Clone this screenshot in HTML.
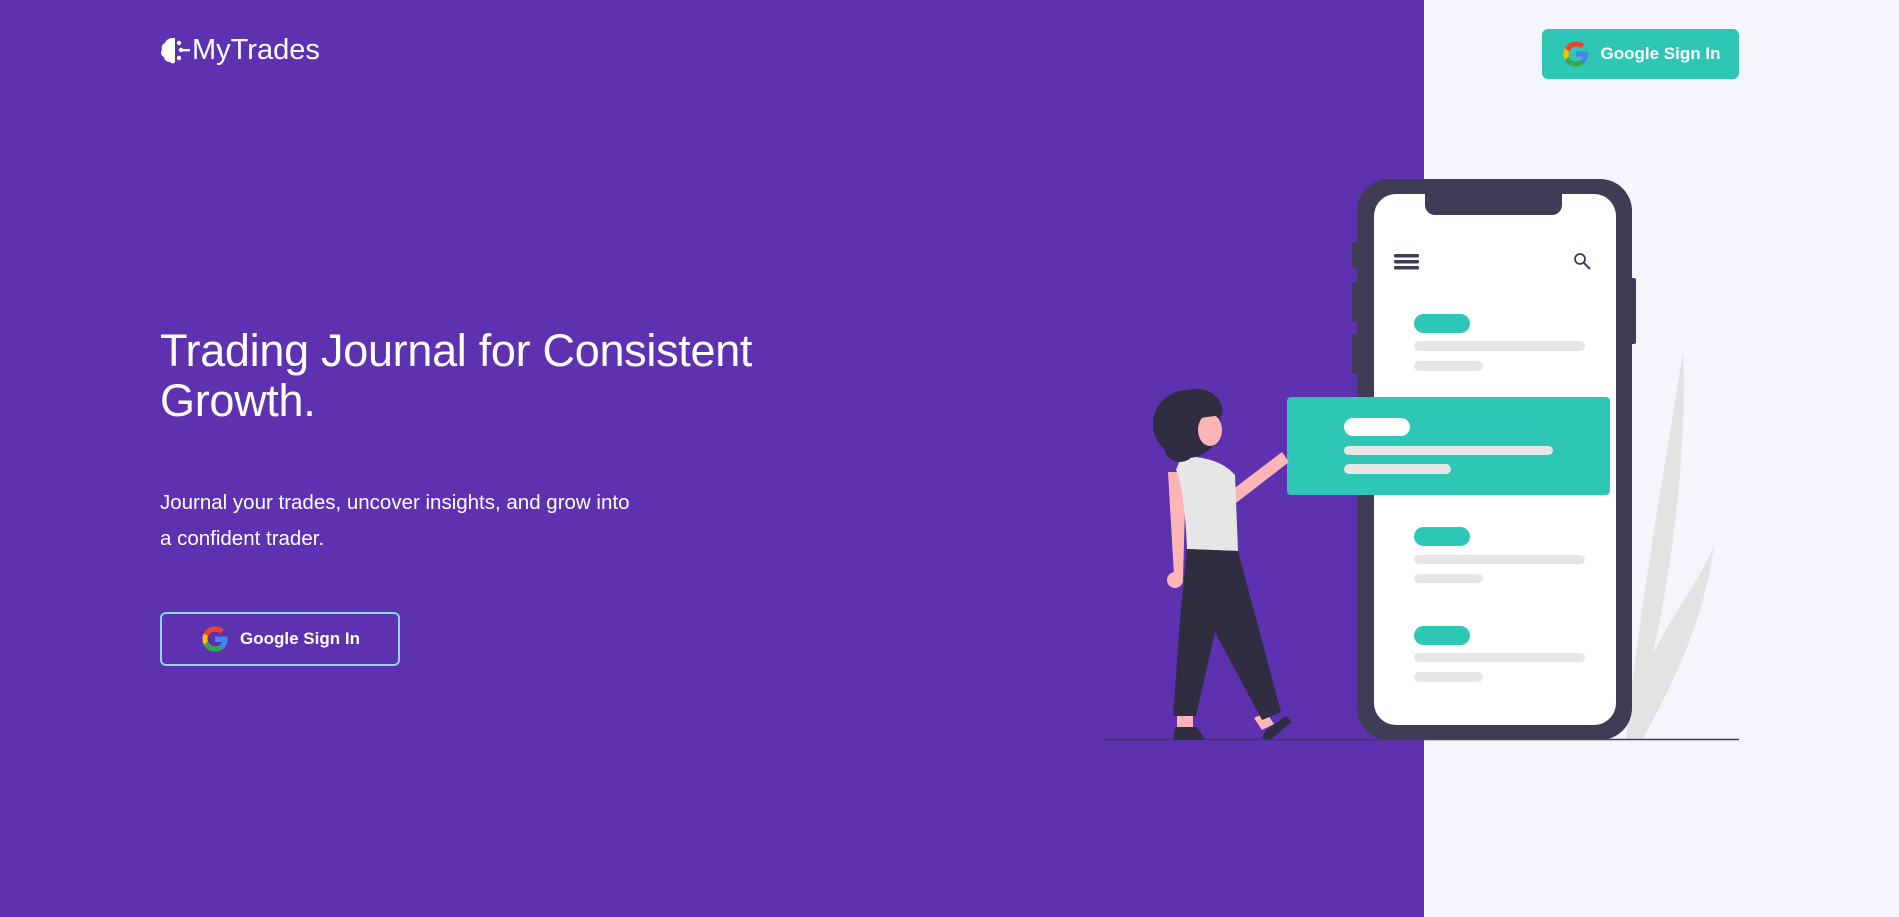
<!DOCTYPE html>
<html><head><meta charset="utf-8"><style>
*{margin:0;padding:0;box-sizing:border-box}
body{width:1899px;height:917px;overflow:hidden;position:relative;font-family:"Liberation Sans",sans-serif;background:#f5f6fd}
.left{position:absolute;left:0;top:0;width:1424px;height:917px;background:#5d31b0}
.logo{position:absolute;left:160px;top:34px;color:#fff;font-size:29px;display:flex;align-items:center}
h1{position:absolute;left:160px;top:326px;color:#fff;font-weight:400;font-size:45px;line-height:50px;width:720px;letter-spacing:-0.3px}
p{position:absolute;left:160px;top:485px;color:#fff;font-size:20.5px;line-height:36px;width:480px}
.btn{position:absolute;display:flex;align-items:center;justify-content:center;gap:10px;color:#fff;font-weight:700;font-size:17px;border-radius:6px}
.b1{left:160px;top:612px;width:240px;height:54px;border:2px solid #8fd3e8}
.b2{left:1542px;top:29px;width:197px;height:50px;background:#2ec6b4}
</style></head><body>
<div class="left"></div>
<div class="logo"><svg width="32" height="32" viewBox="0 0 32 32"><path d="M13 3c-4 0-7 2-8 5-3 1-4 4-3 7-2 2-1 6 2 7 0 3 3 5 6 5 2 2 4 2 5 0V3z" fill="#fff"/><circle cx="19" cy="8" r="2.2" fill="#fff"/><circle cx="21" cy="15" r="2.2" fill="#fff"/><circle cx="19" cy="23" r="2.2" fill="#fff"/><rect x="20" y="14" width="10" height="2.4" fill="#fff"/></svg>MyTrades</div>
<h1>Trading Journal for Consistent Growth.</h1>
<p>Journal your trades, uncover insights, and grow into a confident trader.</p>
<div class="btn b1"><svg width="30" height="30" viewBox="0 0 48 48"><path d="M43.6 20H24v8.5h11.3C34 33 29.6 36 24 36c-6.6 0-12-5.4-12-12s5.4-12 12-12c3 0 5.8 1.1 7.9 3l6-6C34.3 5.7 29.4 4 24 4 13 4 4 13 4 24s9 20 20 20c11 0 20-8 20-20 0-1.3-.1-2.7-.4-4z" fill="#fbbc05"/><path d="M6.3 14.7l7 5.1C15.2 15.3 19.3 12 24 12c3 0 5.8 1.1 7.9 3l6-6C34.3 5.7 29.4 4 24 4 16.3 4 9.7 8.3 6.3 14.7z" fill="#ea4335"/><path d="M24 44c5.2 0 10-2 13.6-5.2l-6.3-5.3C29.3 35 26.8 36 24 36c-5.2 0-9.6-3.3-11.3-8l-7 5.4C9.1 39.8 16 44 24 44z" fill="#34a853"/><path d="M43.6 20H24v8.5h11.3c-.8 2.2-2.2 4-4 5.3l6.3 5.3C41.4 35.6 44 30.3 44 24c0-1.3-.1-2.7-.4-4z" fill="#4285f4"/></svg>Google Sign In</div>
<div class="btn b2"><svg width="30" height="30" viewBox="0 0 48 48"><path d="M43.6 20H24v8.5h11.3C34 33 29.6 36 24 36c-6.6 0-12-5.4-12-12s5.4-12 12-12c3 0 5.8 1.1 7.9 3l6-6C34.3 5.7 29.4 4 24 4 13 4 4 13 4 24s9 20 20 20c11 0 20-8 20-20 0-1.3-.1-2.7-.4-4z" fill="#fbbc05"/><path d="M6.3 14.7l7 5.1C15.2 15.3 19.3 12 24 12c3 0 5.8 1.1 7.9 3l6-6C34.3 5.7 29.4 4 24 4 16.3 4 9.7 8.3 6.3 14.7z" fill="#ea4335"/><path d="M24 44c5.2 0 10-2 13.6-5.2l-6.3-5.3C29.3 35 26.8 36 24 36c-5.2 0-9.6-3.3-11.3-8l-7 5.4C9.1 39.8 16 44 24 44z" fill="#34a853"/><path d="M43.6 20H24v8.5h11.3c-.8 2.2-2.2 4-4 5.3l6.3 5.3C41.4 35.6 44 30.3 44 24c0-1.3-.1-2.7-.4-4z" fill="#4285f4"/></svg>Google Sign In</div>
<svg style="position:absolute;left:0;top:0" width="1899" height="917" viewBox="0 0 1899 917">
<path d="M1683 351 C1688 450 1670 580 1653 654 C1675 610 1700 580 1714 545 C1705 620 1670 690 1642 740 L1626 740 C1640 600 1668 450 1683 351z" fill="#e3e3e3"/>
<line x1="1104" y1="739.5" x2="1739" y2="739.5" stroke="#3f3d56" stroke-width="1.5"/>
<rect x="1357" y="179" width="275" height="561" rx="32" fill="#3f3d56"/>
<rect x="1352" y="242" width="6" height="26" rx="2" fill="#3f3d56"/>
<rect x="1352" y="282" width="6" height="40" rx="2" fill="#3f3d56"/>
<rect x="1352" y="334" width="6" height="40" rx="2" fill="#3f3d56"/>
<rect x="1630" y="278" width="6" height="66" rx="2" fill="#3f3d56"/>
<rect x="1374" y="194" width="242" height="531" rx="22" fill="#fff"/>
<path d="M1425 194 H1562 V205 a10 10 0 0 1 -10 10 H1435 a10 10 0 0 1 -10 -10z" fill="#3f3d56"/>
<g fill="#3f3d56"><rect x="1394" y="254" width="25" height="3.5" rx="1.5"/><rect x="1394" y="260" width="25" height="3.5" rx="1.5"/><rect x="1394" y="266" width="25" height="3.5" rx="1.5"/></g>
<circle cx="1580" cy="259" r="5" fill="none" stroke="#3f3d56" stroke-width="1.8"/><line x1="1584" y1="263" x2="1590" y2="269" stroke="#3f3d56" stroke-width="2"/>
<g fill="#2ec6b4"><rect x="1414" y="314" width="56" height="19" rx="9.5"/><rect x="1414" y="527" width="56" height="19" rx="9.5"/><rect x="1414" y="626" width="56" height="19" rx="9.5"/></g>
<g fill="#e6e6e6"><rect x="1414" y="341" width="171" height="10" rx="5"/><rect x="1414" y="361" width="69" height="10" rx="5"/><rect x="1414" y="555" width="171" height="9" rx="4.5"/><rect x="1414" y="574" width="69" height="9" rx="4.5"/><rect x="1414" y="653" width="171" height="9" rx="4.5"/><rect x="1414" y="672" width="69" height="10" rx="5"/></g>
<rect x="1287" y="397" width="323" height="98" rx="4" fill="#2ec6b4"/>
<rect x="1344" y="418" width="66" height="18" rx="9" fill="#fff"/>
<rect x="1344" y="446" width="209" height="9" rx="4.5" fill="#e6e6e6"/>
<rect x="1344" y="464" width="107" height="10" rx="5" fill="#e6e6e6"/>
<path d="M1232 490 L1282 452 L1289 462 L1236 503z" fill="#fbb5b5"/>
<path d="M1186 472 L1183 578 L1174 576 L1168 472z" fill="#fbb5b5"/>
<circle cx="1175" cy="580" r="8" fill="#fbb5b5"/>
<rect x="1177" y="712" width="16" height="16" fill="#fbb5b5"/><path d="M1266 712 l8 12 -12 6 -8 -12z" fill="#fbb5b5"/>
<path d="M1182 455 C1200 458 1220 458 1235 475 L1238 551 L1187 549 C1186 520 1182 480 1176 470z" fill="#e6e6e6"/>
<path d="M1187 549 L1238 551 L1281 712 L1262 720 L1215 632 L1196 716 L1173 716 L1180 620z" fill="#2f2e41"/>
<path d="M1175 727 h22 l8 13 h-32z" fill="#2f2e41"/><path d="M1266 730 l20 -14 6 6 -22 18 -8 -2z" fill="#2f2e41"/>
<circle cx="1187" cy="424" r="34" fill="#2f2e41"/>
<rect x="1164" y="410" width="32" height="52" rx="16" fill="#2f2e41"/>
<ellipse cx="1210" cy="430" rx="12" ry="16" fill="#fbb5b5"/>
<path d="M1188 390 C1210 385 1225 400 1222 415 L1200 418 C1195 410 1190 400 1188 390z" fill="#2f2e41"/>
</svg>
</body></html>
